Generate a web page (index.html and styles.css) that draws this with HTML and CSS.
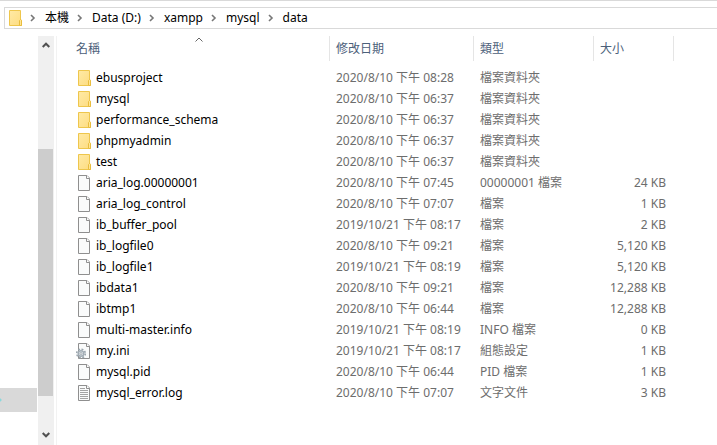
FILE: index.html
```
<!DOCTYPE html>
<html lang="zh-Hant">
<head>
<meta charset="utf-8">
<title>data</title>
<link rel="stylesheet" href="styles.css">
</head>
<body>
<svg class="defs" aria-hidden="true">
  <defs>
    <linearGradient id="fold" x1="0" y1="0" x2="1" y2="1"><stop offset="0" stop-color="#ffeaa6"/><stop offset="1" stop-color="#fddc80"/></linearGradient>
    <symbol id="folder" viewBox="0 0 16 16">
      <path d="M2.5 .5h11v9.500h1v5.500h-12z" fill="url(#fold)" stroke="#eec64c"/>
      <path d="M12.500 15.500v-5l1-1 1 1v5z" fill="#ffe694" stroke="#e9bd3f"/>
    </symbol>
    <symbol id="file" viewBox="0 0 16 16">
      <path d="M2.500 .5h8.500l2.500 2.500v12.500h-11z" fill="#fafbfb" stroke="#8f8f8f"/>
      <path d="M10.500 .5v3h3" fill="#fff" stroke="#8f8f8f"/>
    </symbol>
    <symbol id="config" viewBox="0 0 16 16">
      <use href="#file"/>
      <circle cx="5" cy="10.500" r="4.300" fill="none" stroke="#9aa5ad" stroke-width="1.600" stroke-dasharray="1.900 1.477"/>
      <circle cx="5" cy="10.500" r="2.800" fill="#dde4e9" stroke="#a3adb5" stroke-width="1.400"/>
      <circle cx="5" cy="10.500" r="1" fill="#fff" stroke="#7d8890" stroke-width=".6"/>
    </symbol>
    <symbol id="text" viewBox="0 0 16 16">
      <use href="#file"/>
      <path d="M4 3.500h5M4 5.500h8M4 7.500h8M4 9.500h8M4 11.500h8M4 13.500h8" stroke="#a3a3a3"/>
    </symbol>
    <symbol id="next" viewBox="0 0 6 8"><path d="M1 1l3 3-3 3" fill="none" stroke="#777" stroke-width="1.600"/></symbol>
    <symbol id="up" viewBox="0 0 8 6"><path d="M.7 5L4 1.700 7.300 5" fill="none" stroke="#505050" stroke-width="2"/></symbol>
  </defs>
</svg>
<nav class="address" aria-label="路徑">
  <svg class="icon"><use href="#folder"/></svg>
  <svg class="next"><use href="#next"/></svg><a href="#">本機</a>
  <svg class="next"><use href="#next"/></svg><a href="#">Data (D:)</a>
  <svg class="next"><use href="#next"/></svg><a href="#">xampp</a>
  <svg class="next"><use href="#next"/></svg><a href="#">mysql</a>
  <svg class="next"><use href="#next"/></svg><a href="#">data</a>
</nav>
<div class="content">
  <aside class="tree"><div class="selected"></div></aside>
  <div class="scrollbar">
    <button type="button" aria-label="向上捲動"><svg><use href="#up"/></svg></button>
    <div class="track"><div class="thumb"></div></div>
    <button type="button" class="down" aria-label="向下捲動"><svg><use href="#up"/></svg></button>
  </div>
  <main class="files">
    <table>
      <colgroup><col class="c-name"><col class="c-date"><col class="c-type"><col class="c-size"></colgroup>
      <thead>
        <tr><th aria-sort="ascending">名稱<svg class="sort" viewBox="0 0 8 5"><path d="M.5 4.500L4 1l3.500 3.500" fill="none" stroke="#666"/></svg></th><th>修改日期</th><th>類型</th><th>大小</th></tr>
      </thead>
      <tbody>
        <tr><td><svg class="icon"><use href="#folder"/></svg>ebusproject</td><td>2020/8/10 下午 08:28</td><td>檔案資料夾</td><td></td></tr>
        <tr><td><svg class="icon"><use href="#folder"/></svg>mysql</td><td>2020/8/10 下午 06:37</td><td>檔案資料夾</td><td></td></tr>
        <tr><td><svg class="icon"><use href="#folder"/></svg>performance_schema</td><td>2020/8/10 下午 06:37</td><td>檔案資料夾</td><td></td></tr>
        <tr><td><svg class="icon"><use href="#folder"/></svg>phpmyadmin</td><td>2020/8/10 下午 06:37</td><td>檔案資料夾</td><td></td></tr>
        <tr><td><svg class="icon"><use href="#folder"/></svg>test</td><td>2020/8/10 下午 06:37</td><td>檔案資料夾</td><td></td></tr>
        <tr><td><svg class="icon"><use href="#file"/></svg>aria_log.00000001</td><td>2020/8/10 下午 07:45</td><td>00000001 檔案</td><td>24 KB</td></tr>
        <tr><td><svg class="icon"><use href="#file"/></svg>aria_log_control</td><td>2020/8/10 下午 07:07</td><td>檔案</td><td>1 KB</td></tr>
        <tr><td><svg class="icon"><use href="#file"/></svg>ib_buffer_pool</td><td>2019/10/21 下午 08:17</td><td>檔案</td><td>2 KB</td></tr>
        <tr><td><svg class="icon"><use href="#file"/></svg>ib_logfile0</td><td>2020/8/10 下午 09:21</td><td>檔案</td><td>5,120 KB</td></tr>
        <tr><td><svg class="icon"><use href="#file"/></svg>ib_logfile1</td><td>2019/10/21 下午 08:19</td><td>檔案</td><td>5,120 KB</td></tr>
        <tr><td><svg class="icon"><use href="#file"/></svg>ibdata1</td><td>2020/8/10 下午 09:21</td><td>檔案</td><td>12,288 KB</td></tr>
        <tr><td><svg class="icon"><use href="#file"/></svg>ibtmp1</td><td>2020/8/10 下午 06:44</td><td>檔案</td><td>12,288 KB</td></tr>
        <tr><td><svg class="icon"><use href="#file"/></svg>multi-master.info</td><td>2019/10/21 下午 08:19</td><td>INFO 檔案</td><td>0 KB</td></tr>
        <tr><td><svg class="icon"><use href="#config"/></svg>my.ini</td><td>2019/10/21 下午 08:17</td><td>組態設定</td><td>1 KB</td></tr>
        <tr><td><svg class="icon"><use href="#file"/></svg>mysql.pid</td><td>2020/8/10 下午 06:44</td><td>PID 檔案</td><td>1 KB</td></tr>
        <tr><td><svg class="icon"><use href="#text"/></svg>mysql_error.log</td><td>2020/8/10 下午 07:07</td><td>文字文件</td><td>3 KB</td></tr>
      </tbody>
    </table>
  </main>
</div>
</body>
</html>
```
FILE: styles.css
```
* { box-sizing: border-box; }
body {
  margin: 0;
  min-height: 100vh;
  display: flex;
  flex-direction: column;
  background: #fff;
  border-top: 1px solid #d9d9d9;
  font: 12px/20px "Noto Sans", "Noto Sans CJK TC", sans-serif;
  color: #000;
}
.defs { position: absolute; width: 0; height: 0; }
.icon { width: 16px; height: 16px; flex: none; }
.address {
  display: flex;
  align-items: center;
  height: 22px;
  margin: 6px 0 7px 4px;
  padding-left: 2px;
  border: 1px solid #d9d9d9;
  border-right: 0;
}
.address .icon { margin-right: -1px; }
.address a { color: #000; text-decoration: none; white-space: nowrap; }
.address .next { width: 6px; height: 8px; margin: 0 9px 0 8px; flex: none; }
.content { flex: 1; display: flex; }
.tree { width: 38px; flex: none; padding-right: 1px; }
.selected {
  height: 24px;
  margin-top: 352px;
  background: radial-gradient(circle at 0 50%, #8ad8dc 1px, #d9d9d9 2px);
}
.scrollbar {
  width: 16px;
  flex: none;
  display: flex;
  flex-direction: column;
  background: #f0f0f0;
}
.scrollbar button {
  height: 17px;
  padding: 0;
  border: 0;
  background: none;
  display: flex;
  align-items: center;
  justify-content: center;
}
.scrollbar svg { width: 8px; height: 6px; }
.scrollbar .down { height: 21px; }
.scrollbar .down svg { transform: rotate(180deg); }
.track { flex: 1; padding: 96px 1px 0 0; }
.thumb { height: 247px; background: #cdcdcd; }
.files { flex: 1; margin-left: 2px; border-left: 1px solid #f2f2f2; }
table { width: 617px; table-layout: fixed; border-collapse: separate; border-spacing: 0; }
.c-name { width: 273px; }
.c-date { width: 144px; }
.c-type { width: 120px; }
.c-size { width: 80px; }
th {
  position: relative;
  height: 25px;
  padding: 0 0 0 6px;
  border-right: 1px solid #e5e5e5;
  text-align: left;
  font-weight: 400;
  color: #4c607a;
}
th:first-child { padding-left: 19px; }
.sort { position: absolute; left: 138px; top: 1px; width: 8px; height: 5px; }
tbody::before { content: ""; display: block; height: 6px; }
td { height: 21px; padding: 0 8px 0 6px; color: #6d6d6d; white-space: nowrap; }
td:first-child { padding-left: 19px; color: #000; }
td .icon { margin-right: 4px; vertical-align: middle; }
td:last-child { text-align: right; }
```
